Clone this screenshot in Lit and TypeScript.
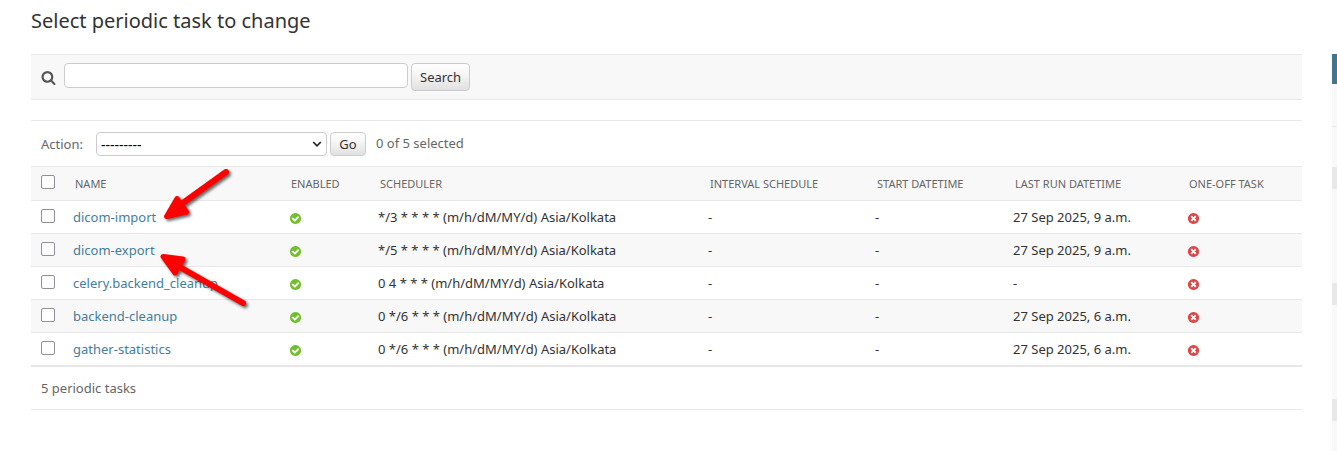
import { LitElement, html, css, svg } from "lit";
import { customElement } from "lit/decorators.js";

interface Task {
  name: string;
  scheduler: string;
  lastRun: string;
}

const TASKS: Task[] = [
  { name: "dicom-import", scheduler: "*/3 * * * * (m/h/dM/MY/d) Asia/Kolkata", lastRun: "27 Sep 2025, 9 a.m." },
  { name: "dicom-export", scheduler: "*/5 * * * * (m/h/dM/MY/d) Asia/Kolkata", lastRun: "27 Sep 2025, 9 a.m." },
  { name: "celery.backend_cleanup", scheduler: "0 4 * * * (m/h/dM/MY/d) Asia/Kolkata", lastRun: "-" },
  { name: "backend-cleanup", scheduler: "0 */6 * * * (m/h/dM/MY/d) Asia/Kolkata", lastRun: "27 Sep 2025, 6 a.m." },
  { name: "gather-statistics", scheduler: "0 */6 * * * (m/h/dM/MY/d) Asia/Kolkata", lastRun: "27 Sep 2025, 6 a.m." },
];

const HEADERS = ["Name", "Enabled", "Scheduler", "Interval Schedule", "Start Datetime", "Last Run Datetime", "One-off Task"];

const DISC = "q0 209-103 385.5t-279.5 279.5-385.5 103-385.5-103-279.5-279.5-103-385.5 103-385.5 279.5-279.5 385.5-103 385.5 103 279.5 279.5 103 385.5z";

const yesIcon = html`<svg class="icon" viewBox="0 0 1792 1792">${svg`<path fill="#70bf2b" d=${"M1412 734q0-28-18-46l-91-90q-19-19-45-19t-45 19l-408 407-226-226q-19-19-45-19t-45 19l-91 90q-18 18-18 46 0 27 18 45l362 362q19 19 45 19 27 0 46-19l543-543q18-18 18-45zm252 162" + DISC}/>`}</svg>`;

const noIcon = html`<svg class="icon" viewBox="0 0 1792 1792">${svg`<path fill="#dd4646" d=${"M1277 1122q0-26-19-45l-181-181 181-181q19-19 19-45 0-27-19-46l-90-90q-19-19-46-19-26 0-45 19l-181 181-181-181q-19-19-45-19-27 0-46 19l-90 90q-19 19-19 46 0 26 19 45l181 181-181 181q-19 19-19 45 0 27 19 46l90 90q19 19 46 19 26 0 45-19l181-181 181 181q19 19 45 19 27 0 46-19l90-90q19-19 19-46zm387-226" + DISC}/>`}</svg>`;

@customElement("app-root")
export class AppRoot extends LitElement {
  static styles = css`
    :host {
      display: block;
      position: relative;
      height: 451px;
      overflow: hidden;
      background: #fff;
      color: #333;
      font: 13px/17px "Noto Sans", sans-serif;
    }
    * { box-sizing: border-box; }
    .page {
      display: grid;
      grid-template-columns: 1271px 5px;
      column-gap: 30px;
      padding-left: 31px;
    }
    .title {
      grid-column: 1 / -1;
      height: 54px;
      margin: 0;
      padding-top: 8px;
      font-size: 20px;
      line-height: 26px;
      font-weight: 400;
    }
    .toolbar {
      display: flex;
      align-items: flex-start;
      height: 46px;
      padding: 8px 10px 0;
      background: #f8f8f8;
      border: solid #e8e8e8;
      border-width: 1px 0;
    }
    .lens { width: 15px; height: 15px; margin: 7px 8px 0 0; }
    .query {
      width: 344px;
      height: 25px;
      margin: 0 3px 0 0;
      border: 1px solid #ccc;
      border-radius: 4px;
      background: #fff;
      font: inherit;
      outline: none;
    }
    .button {
      height: 28px;
      padding: 0 8px;
      border: 1px solid #ccc;
      border-radius: 4px;
      background: linear-gradient(#fff, #f6f6f6 40%, #e0e0e0);
      color: #333;
      font: inherit;
    }
    .search { width: 59px; }
    .actions {
      display: flex;
      align-items: flex-start;
      height: 46px;
      margin-top: 20px;
      padding: 11px 10px 0;
      border-top: 1px solid #e8e8e8;
      color: #666;
    }
    .label { width: 55px; padding-top: 4px; }
    .select {
      display: flex;
      justify-content: space-between;
      align-items: center;
      width: 231px;
      height: 24px;
      margin-right: 3px;
      padding: 0 4px;
      border: 1px solid #ccc;
      border-radius: 4px;
      color: #000;
      font-size: 14px;
    }
    .chevron { width: 10px; height: 8px; }
    .go { width: 36px; height: 24px; padding: 0; }
    .count { padding: 3px 0 0 10px; }
    .row {
      display: grid;
      grid-template-columns: 34px 216px 89px 330px 167px 138px 174px 1fr;
      height: 33px;
      border-bottom: 1px solid #e8e8e8;
    }
    .row.alt { background: #f8f8f8; }
    .row.head {
      height: 35px;
      background: #f8f8f8;
      border-top: 1px solid #e8e8e8;
      color: #666;
      font-size: 11px;
      text-transform: uppercase;
    }
    .cell { padding: 8px 8px 0; white-space: nowrap; }
    .head .cell { padding: 8px 10px 0; }
    .cell.check { padding: 8px 0 0 10px; }
    .box {
      display: block;
      width: 14px;
      height: 14px;
      border: 1px solid #8f8f9d;
      border-radius: 2px;
      background: #fff;
    }
    .link { color: #447e9b; text-decoration: none; }
    .icon { display: block; width: 13px; height: 13px; margin-top: 3px; }
    .footer {
      height: 44px;
      padding: 13px 10px 0;
      border: solid #e8e8e8;
      border-width: 1px 0;
      color: #666;
    }
    .filters { height: 397px; background: #f8f8f8; }
    .filters-title { height: 30px; background: #417690; }
    .filters-rule { height: 43px; border-bottom: 1px solid #e8e8e8; }
    .selected { height: 22px; margin-top: 40px; background: #e8e8e8; }
    .selected ~ .selected { margin-top: 94px; }
    .arrows { position: absolute; left: 0; top: 0; width: 300px; height: 330px; pointer-events: none; }
    .arrow { filter: drop-shadow(2px 2px 1.5px rgba(0, 0, 0, 0.6)); }
  `;

  private row(task: Task, index: number) {
    return html`<div class="row ${index % 2 ? "alt" : ""}">
      <div class="cell check"><span class="box"></span></div>
      <div class="cell"><a class="link">${task.name}</a></div>
      <div class="cell">${yesIcon}</div>
      <div class="cell">${task.scheduler}</div>
      <div class="cell">-</div>
      <div class="cell">-</div>
      <div class="cell">${task.lastRun}</div>
      <div class="cell">${noIcon}</div>
    </div>`;
  }

  render() {
    return html`
      <div class="page">
        <h1 class="title">Select periodic task to change</h1>
        <main>
          <div class="toolbar">
            <svg class="lens" viewBox="0 0 1792 1792"><path fill="#555" d="M1216 832q0-185-131.5-316.5t-316.5-131.5-316.5 131.5-131.5 316.5 131.5 316.5 316.5 131.5 316.5-131.5 131.5-316.5zm512 832q0 52-38 90t-90 38q-54 0-90-38l-343-342q-179 124-399 124-143 0-273.5-55.5t-225-150-150-225-55.5-273.5 55.5-273.5 150-225 225-150 273.5-55.5 273.5 55.5 225 150 150 225 55.5 273.5q0 220-124 399l343 343q37 37 37 90z"/></svg>
            <input class="query" type="text" />
            <button class="button search">Search</button>
          </div>
          <div class="actions">
            <span class="label">Action:</span>
            <div class="select">
              <span>---------</span>
              <svg class="chevron" viewBox="0 0 10 8"><path d="M1.2 2L5 5.8L8.8 2" fill="none" stroke="#222" stroke-width="1.7"/></svg>
            </div>
            <button class="button go">Go</button>
            <span class="count">0 of 5 selected</span>
          </div>
          <div class="row head">
            <div class="cell check"><span class="box"></span></div>
            ${HEADERS.map((h) => html`<div class="cell">${h}</div>`)}
          </div>
          ${TASKS.map((t, i) => this.row(t, i))}
          <div class="footer">5 periodic tasks</div>
        </main>
        <aside class="filters">
          <div class="filters-title"></div>
          <div class="filters-rule"></div>
          <div class="selected"></div>
          <div class="selected"></div>
          <div class="selected"></div>
        </aside>
      </div>
      <svg class="arrows" viewBox="0 0 300 330">
        <g class="arrow" fill="#f00" stroke="#f00" stroke-linecap="round" stroke-linejoin="round">
          <path d="M226 172L180 205" stroke-width="6"/>
          <path d="M166.500 216.500L177 198.500L186.500 212Z" stroke-width="5"/>
        </g>
        <g class="arrow" fill="#f00" stroke="#f00" stroke-linecap="round" stroke-linejoin="round">
          <path d="M243 303L178 266" stroke-width="6"/>
          <path d="M163 256.500L183 259L175 273Z" stroke-width="5"/>
        </g>
      </svg>
    `;
  }
}
